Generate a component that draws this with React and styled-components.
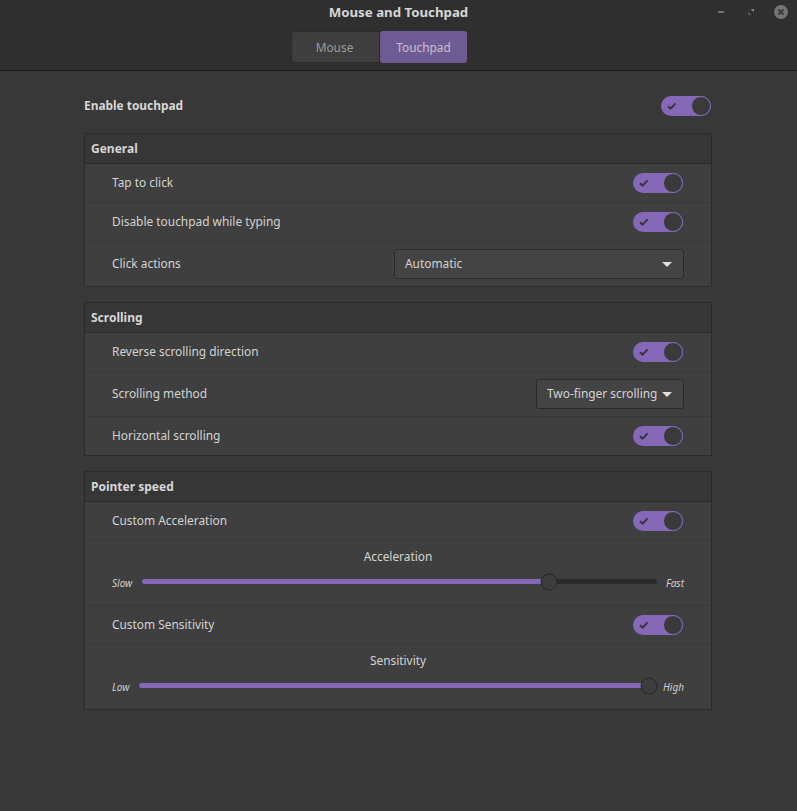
import React from "react"
import styled, { createGlobalStyle } from "styled-components"

const GlobalStyle = createGlobalStyle`
  html, body {
    margin: 0;
    padding: 0;
    background: #383838;
  }
  body {
    font-family: "Noto Sans", sans-serif;
    font-size: 11.9px;
    color: #d3d3d3;
  }
`

const Page = styled.div`
  width: 797px;
  height: 811px;
  overflow: hidden;
  background: #383838;
`

const HeaderBar = styled.header`
  box-sizing: border-box;
  background: #2f2f2f;
  border-bottom: 1px solid #1d1d1d;
  height: 71px;
  display: flex;
  flex-direction: column;
  align-items: flex-start;
`

const TitleRow = styled.div`
  display: grid;
  grid-template-columns: 1fr auto 1fr;
  align-items: center;
  width: 100%;
  height: 31px;
  padding-bottom: 8px;
  box-sizing: border-box;
`

const Title = styled.div`
  font-size: 13.25px;
  font-weight: 700;
  color: #d6d6d6;
  line-height: 24px;
`

const WindowButtons = styled.div`
  display: flex;
  justify-content: flex-end;
  align-items: center;
  padding-right: 9px;
`

const WindowButton = styled.svg`
  display: block;
  margin-left: ${props => props.$gap}px;
`

const TabSwitch = styled.div`
  display: flex;
  margin-left: 291px;
  height: 32px;
  width: 176px;
  border-radius: 3px;
  overflow: hidden;
`

const Tab = styled.div`
  width: ${props => props.$active ? 87 : 89}px;
  padding-right: ${props => props.$active ? 0 : 2}px;
  display: flex;
  align-items: center;
  justify-content: center;
  background: ${props => props.$active ? "#6f5b94" : "#3e3e3e"};
  color: ${props => props.$active ? "#c6c0d1" : "#9c9c9c"};
  border: ${props => props.$active ? "none" : "1px solid #2b2b2b"};
  border-radius: 3px 0 0 3px;
  box-sizing: border-box;
`

const Content = styled.main`
  padding: 0 85px 0 84px;
  display: flex;
  flex-direction: column;
`

const EnableRow = styled.div`
  height: 62px;
  box-sizing: border-box;
  padding: 8px 1px 0 0;
  display: flex;
  align-items: center;
  justify-content: space-between;
  font-weight: 700;
  color: #d6d6d6;
`

const Section = styled.section`
  border: 1px solid #2b2b2b;
  background: #3f3f3f;
  margin-bottom: 15px;
`

const SectionTitle = styled.h2`
  margin: 0;
  height: 30px;
  box-sizing: border-box;
  padding-left: 6px;
  display: flex;
  align-items: center;
  font-size: 12px;
  font-weight: 700;
  color: #d6d6d6;
  background: #363636;
  border-bottom: 1px solid #2b2b2b;
`

const Row = styled.div`
  height: ${props => props.$height || 39}px;
  box-sizing: border-box;
  padding: 0 28px 0 27px;
  display: flex;
  align-items: center;
  justify-content: space-between;
  border-bottom: ${props => props.$last ? "none" : "1px solid #383838"};
`

const RowLabel = styled.span`
  margin-bottom: 2px;
`

const SliderRow = styled.div`
  height: ${props => props.$height}px;
  box-sizing: border-box;
  padding: 7px 27px 0;
  border-bottom: ${props => props.$last ? "none" : "1px solid #383838"};
  display: flex;
  flex-direction: column;
`

const SliderTitle = styled.div`
  text-align: center;
  line-height: 17px;
  margin-bottom: 8px;
`

const SliderLine = styled.div`
  display: flex;
  align-items: center;
  height: 17px;
`

const EndLabel = styled.span`
  font-size: 10px;
  font-style: italic;
  color: #cfcfcf;
  position: relative;
  top: 1px;
`

const Track = styled.div`
  flex: 1;
  height: 5px;
  margin: 0 ${props => props.$right}px 0 ${props => props.$left}px;
  border-radius: 3px;
  background: #2a2a2a;
  position: relative;
`

const TrackFill = styled.div`
  height: 100%;
  border-radius: 3px 0 0 3px;
  background: #8569b8;
`

const Thumb = styled.div`
  position: absolute;
  top: 50%;
  width: 17px;
  height: 17px;
  box-sizing: border-box;
  border-radius: 50%;
  background: #3d3d3d;
  border: 1px solid #262626;
  transform: translate(-50%, -50%);
`

const Dropdown = styled.div`
  width: ${props => props.$width}px;
  height: 30px;
  box-sizing: border-box;
  margin-right: -1px;
  padding: 0 11px 0 10px;
  display: flex;
  align-items: center;
  justify-content: space-between;
  background: #444444;
  border: 1px solid #2a2a2a;
  border-radius: 3px;
`

const Caret = styled.span`
  width: 0;
  height: 0;
  border-left: 5px solid transparent;
  border-right: 5px solid transparent;
  border-top: 5px solid #e0e0e0;
`

const SwitchBody = styled.div`
  width: 50px;
  height: 20px;
  box-sizing: border-box;
  padding-left: 6px;
  border-radius: 10px;
  background: #8569b8;
  display: flex;
  align-items: center;
  justify-content: space-between;
`

const SwitchKnob = styled.div`
  width: 20px;
  height: 20px;
  box-sizing: border-box;
  border-radius: 50%;
  background: #3a3a3a;
  border: 1px solid #8569b8;
`

const Toggle = () => (
  <SwitchBody>
    <svg width="10" height="8" viewBox="0 0 10 8">
      <path d="M1 4.2 L3.6 6.6 L8.6 1.4" fill="none" stroke="#38343f" strokeWidth="2" />
    </svg>
    <SwitchKnob />
  </SwitchBody>
)

// thumb stays inside the track, so its centre runs from 8.5px to width - 8.5px
const thumbPos = value => `calc(8.5px + (100% - 17px) * ${value / 100})`

const Slider = ({ title, low, high, value, left, right, height, last }) => (
  <SliderRow $height={height} $last={last}>
    <SliderTitle>{title}</SliderTitle>
    <SliderLine>
      <EndLabel>{low}</EndLabel>
      <Track $left={left} $right={right}>
        <TrackFill style={{ width: thumbPos(value) }} />
        <Thumb style={{ left: thumbPos(value) }} />
      </Track>
      <EndLabel>{high}</EndLabel>
    </SliderLine>
  </SliderRow>
)

const App = () => {
  return (
    <Page>
      <GlobalStyle />
      <HeaderBar>
        <TitleRow>
          <span />
          <Title>Mouse and Touchpad</Title>
          <WindowButtons>
            <WindowButton $gap={0} width="8" height="8" viewBox="0 0 8 8">
              <rect x="1" y="3" width="6" height="2" fill="#727272" />
            </WindowButton>
            <WindowButton $gap={22} width="8" height="8" viewBox="0 0 8 8">
              <path d="M3.5 1 H7 V4.5 Z" fill="#7c7c7c" />
              <path d="M1 3.5 L4.5 7 H1 Z" fill="#5c5c5c" />
            </WindowButton>
            <WindowButton $gap={19} width="14" height="14" viewBox="0 0 14 14">
              <circle cx="7" cy="7" r="7" fill="#737373" />
              <path d="M4.5 4.5 L9.5 9.5 M9.5 4.5 L4.5 9.5" stroke="#3a3a3a" strokeWidth="1.8" />
            </WindowButton>
          </WindowButtons>
        </TitleRow>
        <TabSwitch>
          <Tab>Mouse</Tab>
          <Tab $active>Touchpad</Tab>
        </TabSwitch>
      </HeaderBar>
      <Content>
        <EnableRow>
          <RowLabel>Enable touchpad</RowLabel>
          <Toggle />
        </EnableRow>
        <Section>
          <SectionTitle>General</SectionTitle>
          <Row><RowLabel>Tap to click</RowLabel><Toggle /></Row>
          <Row><RowLabel>Disable touchpad while typing</RowLabel><Toggle /></Row>
          <Row $height={44} $last>
            <RowLabel>Click actions</RowLabel>
            <Dropdown $width={290}><RowLabel>Automatic</RowLabel><Caret /></Dropdown>
          </Row>
        </Section>
        <Section>
          <SectionTitle>Scrolling</SectionTitle>
          <Row><RowLabel>Reverse scrolling direction</RowLabel><Toggle /></Row>
          <Row $height={45}>
            <RowLabel>Scrolling method</RowLabel>
            <Dropdown $width={148}><RowLabel>Two-finger scrolling</RowLabel><Caret /></Dropdown>
          </Row>
          <Row $height={38} $last><RowLabel>Horizontal scrolling</RowLabel><Toggle /></Row>
        </Section>
        <Section>
          <SectionTitle>Pointer speed</SectionTitle>
          <Row><RowLabel>Custom Acceleration</RowLabel><Toggle /></Row>
          <Slider title="Acceleration" low="Slow" high="Fast" value={80} left={10} right={9} height={65} />
          <Row><RowLabel>Custom Sensitivity</RowLabel><Toggle /></Row>
          <Slider title="Sensitivity" low="Low" high="High" value={100} left={10} right={6} height={64} last />
        </Section>
      </Content>
    </Page>
  )
}

export default App
